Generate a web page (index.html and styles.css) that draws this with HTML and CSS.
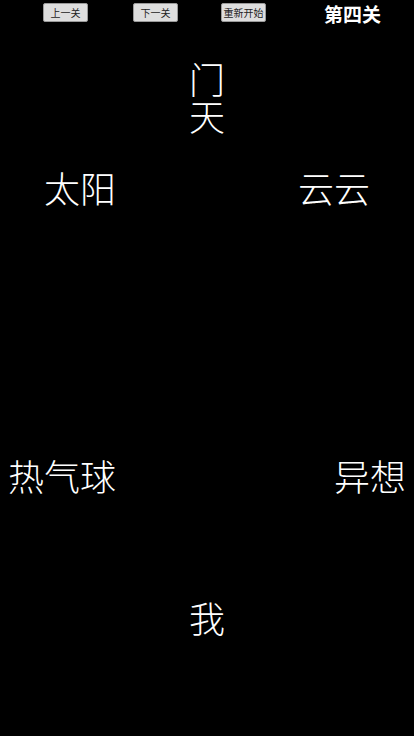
FILE: index.html
```html
<!DOCTYPE html>
<html lang="zh">
<head>
<meta charset="utf-8">
<title>第四关</title>
<link rel="stylesheet" href="styles.css">
</head>
<body>
<div class="topbar">
  <button class="btn btn-prev">上一关</button>
  <button class="btn btn-next">下一关</button>
  <button class="btn btn-reset">重新开始</button>
  <div class="level">第四关</div>
</div>
<div class="scene">
  <div class="row row-top">
    <div class="stack">
      <div class="word">门</div>
      <div class="word">天</div>
    </div>
  </div>
  <div class="row row-upper">
    <div class="word">太阳</div>
    <div class="word">云云</div>
  </div>
  <div class="row row-middle">
    <div class="word">热气球</div>
    <div class="word">异想</div>
  </div>
  <div class="row row-bottom">
    <div class="word">我</div>
  </div>
</div>
</body>
</html>
```
FILE: styles.css
```css
html, body {
  margin: 0;
  padding: 0;
  background: #000;
}
body {
  width: 414px;
  height: 736px;
  overflow: hidden;
  color: #fff;
  font-family: "Noto Sans CJK SC", "Noto Sans", sans-serif;
}
.topbar {
  display: flex;
  align-items: center;
  height: 19px;
  padding-top: 3px;
  padding-left: 43px;
}
.btn {
  box-sizing: border-box;
  width: 45px;
  height: 19px;
  padding: 0;
  margin: 0;
  background: #dedede;
  border: 1px solid #9a9a9a;
  border-radius: 2px;
  color: #222;
  font-family: "Noto Sans CJK SC", sans-serif;
  font-size: 10px;
  line-height: 17px;
}
.btn-next { margin-left: 45px; }
.btn-reset { margin-left: 43px; }
.level {
  margin-left: 58px;
  font-size: 19px;
  font-weight: bold;
  line-height: 19px;
  margin-top: 1px;
}
.scene {
  padding: 0 8px;
}
.row {
  display: flex;
  justify-content: space-between;
}
.row-top {
  justify-content: center;
  margin-top: 38px;
}
.stack {
  display: flex;
  flex-direction: column;
  gap: 1px;
  align-items: center;
}
.row-upper {
  margin-top: 36px;
  padding: 0 36px;
}
.row-middle {
  margin-top: 252px;
}
.row-bottom {
  justify-content: center;
  margin-top: 106px;
}
.word {
  font-size: 36px;
  font-weight: 300;
  line-height: 36px;
  white-space: nowrap;
}
```
